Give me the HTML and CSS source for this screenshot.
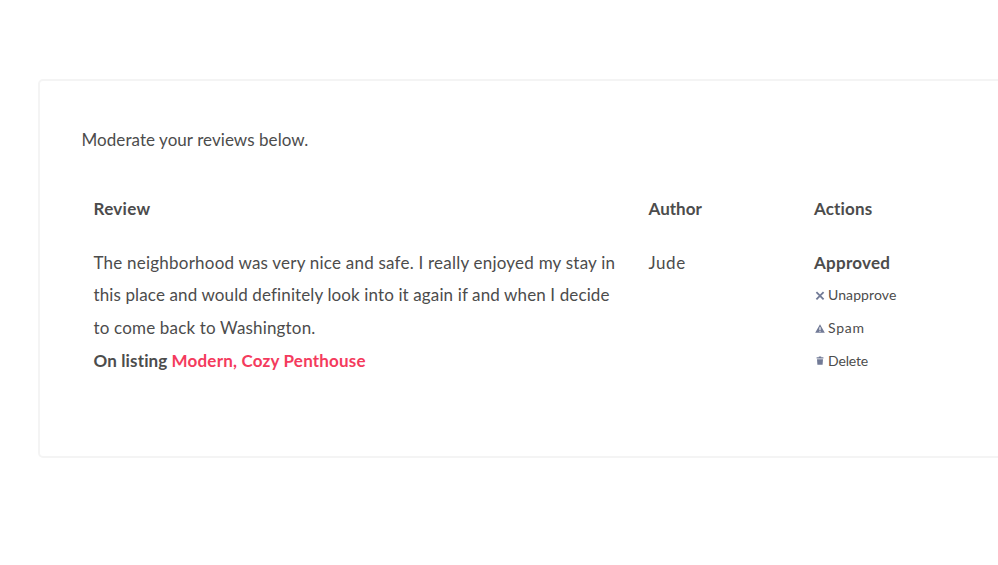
FILE: index.html
```html
<!DOCTYPE html>
<html lang="en">
<head>
<meta charset="utf-8">
<title>Reviews</title>
<link rel="stylesheet" href="styles.css">
</head>
<body>
<main class="panel">
  <p class="intro">Moderate your reviews below.</p>
  <div class="reviews">
    <div class="head"><span class="h-review">Review</span></div>
    <div class="head"><span class="h-author">Author</span></div>
    <div class="head"><span class="h-actions">Actions</span></div>
    <div class="cell review">
      <span class="l1">The neighborhood was very nice and safe. I really enjoyed my stay in</span><br>
      <span class="l2">this place and would definitely look into it again if and when I decide</span><br>
      <span class="l3">to come back to Washington.</span><br>
      <strong><span class="on">On listing</span> <a class="listing">Modern, Cozy Penthouse</a></strong>
    </div>
    <div class="cell"><span class="author">Jude</span></div>
    <div class="cell">
      <strong class="status">Approved</strong>
      <a class="action"><svg class="icon" viewBox="0 0 10 10"><path d="M1.4 1.2 8.6 8.4M8.6 1.2 1.4 8.4" fill="none" stroke="currentColor" stroke-width="1.8"/></svg><span class="unapprove">Unapprove</span></a>
      <a class="action"><svg class="icon" viewBox="0 0 10 10"><path fill="currentColor" fill-rule="evenodd" d="M5 .2 9.8 8.8H.2ZM4.4 3.2V6H5.6V3.2ZM4.4 6.7V7.7H5.6V6.7Z"/></svg><span class="spam">Spam</span></a>
      <a class="action"><svg class="icon" viewBox="0 0 10 10"><path fill="currentColor" d="M3.8.4H6.2V1.2H8.4V2.6H1.6V1.2H3.8ZM2 3.2H8L7.6 8.8H2.4Z"/></svg><span class="delete">Delete</span></a>
    </div>
  </div>
</main>
</body>
</html>
```

FILE: styles.css
```css
* { box-sizing: border-box; }
body {
  margin: 0;
  padding: 79px 0 0 38px;
  height: 565px;
  overflow: hidden;
  background: #fff;
  color: #4c4c4c;
  font: 17px/32.8px Lato, "Open Sans", sans-serif;
  white-space: nowrap;
}
.panel {
  width: 1000px;
  height: 379px;
  padding: 42.5px 43px 0 41.5px;
  border: 2px solid #f4f4f4;
  border-radius: 5px;
}
.intro { margin: 0; letter-spacing: .06px; }
.reviews {
  display: grid;
  grid-template-columns: 555px 165.5px 1fr;
  padding: 36.5px 12px 0;
}
.head { font-weight: 700; }
.cell { padding-top: 21px; }
.h-review { letter-spacing: .3px; }
.h-author { letter-spacing: .02px; }
.h-actions { letter-spacing: .15px; }
.l1 { letter-spacing: .22px; }
.l2 { letter-spacing: .12px; }
.l3 { letter-spacing: .17px; }
.on { letter-spacing: .14px; }
.author { letter-spacing: .6px; }
.listing { color: #f43b5d; letter-spacing: .19px; }
.status { display: block; letter-spacing: .27px; }
.action {
  display: flex;
  align-items: center;
  gap: 3px;
  padding-left: 1px;
  font-size: 14px;
}
.unapprove { letter-spacing: .1px; }
.spam { letter-spacing: .75px; }
.delete { letter-spacing: -.15px; }
.icon { width: 10px; height: 10px; color: #717a96; }
```
